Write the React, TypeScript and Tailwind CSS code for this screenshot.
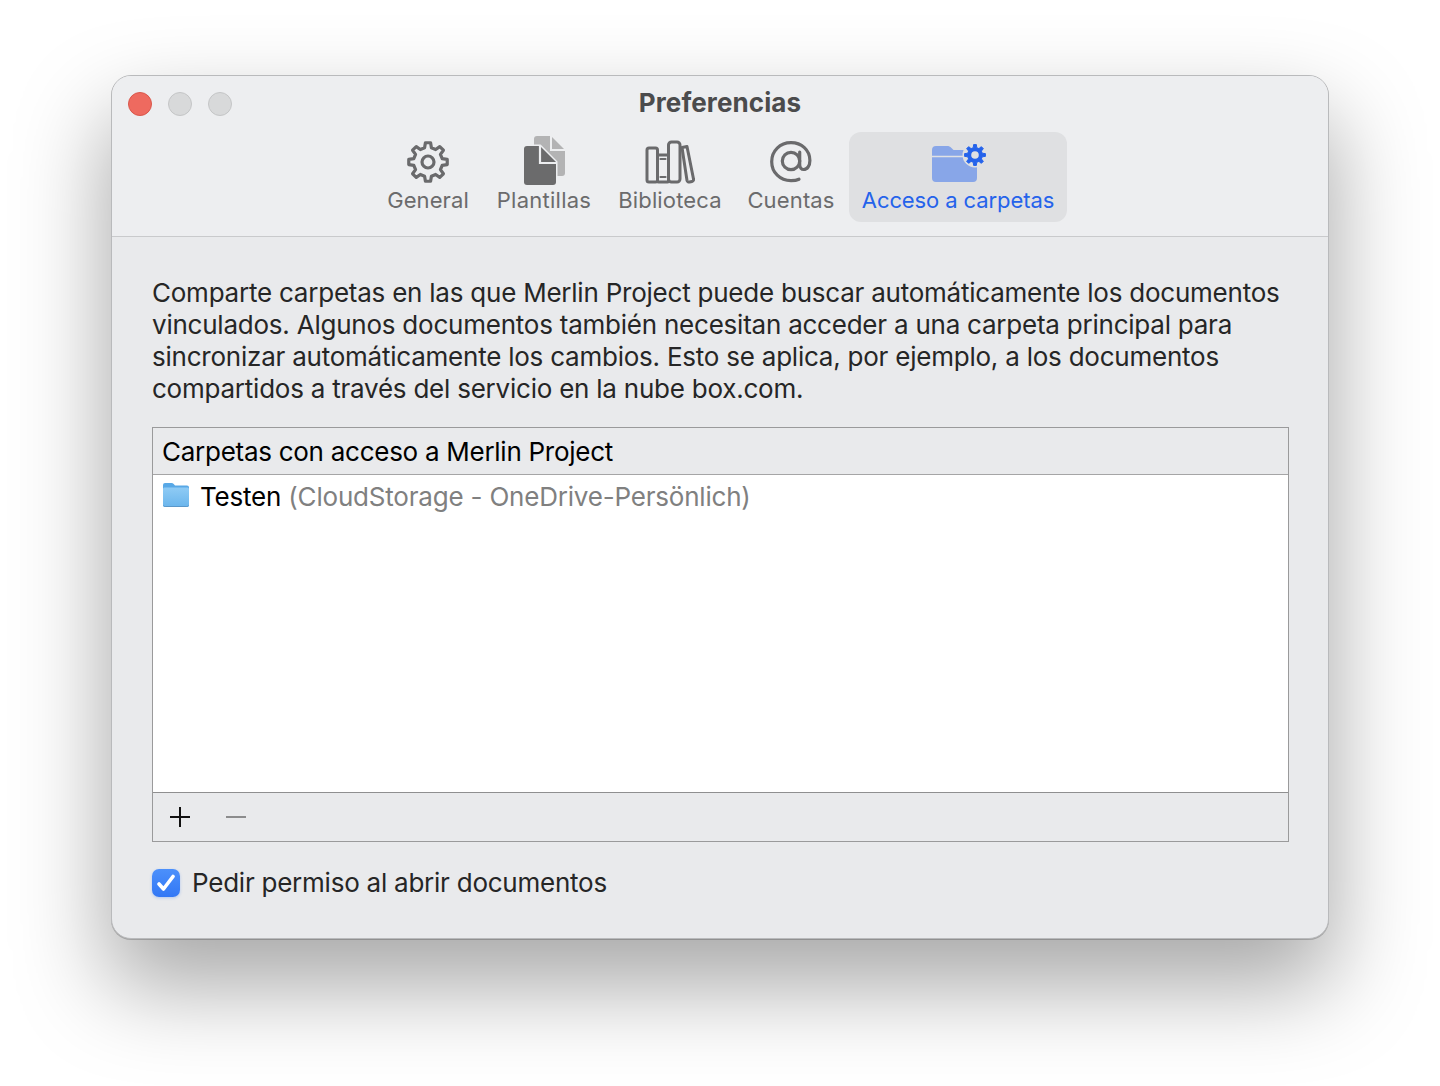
const gearPath = (cx: number, cy: number, rOut: number, rIn: number, teeth: number) => {
  const pts: string[] = [];
  const step = (Math.PI * 2) / teeth;
  for (let i = 0; i < teeth; i++) {
    const a = i * step - Math.PI / 2;
    const p = (r: number, t: number) => `${(cx + r * Math.cos(t)).toFixed(2)} ${(cy + r * Math.sin(t)).toFixed(2)}`;
    pts.push(`${i === 0 ? "M" : "L"}${p(rIn, a - step * 0.3)}`);
    pts.push(`L${p(rOut, a - step * 0.17)}`);
    pts.push(`L${p(rOut, a + step * 0.17)}`);
    pts.push(`L${p(rIn, a + step * 0.3)}`);
  }
  return pts.join(" ") + "Z";
};

function GearIcon() {
  return (
    <svg width="44" height="44" viewBox="0 0 44 44" fill="none" stroke="#6a6a6c" strokeWidth="3.2" strokeLinejoin="round">
      <path d={gearPath(22, 22, 19.4, 14.6, 8)} />
      <circle cx="22" cy="22" r="6" />
    </svg>
  );
}

function TemplatesIcon() {
  return (
    <svg width="44" height="50" viewBox="-1 0 44 50">
      <path d="M14 1h14l14 14v23a3 3 0 0 1-3 3H14a3 3 0 0 1-3-3V4a3 3 0 0 1 3-3Z" fill="#b3b3b4" />
      <path d="M28 1v14h14" fill="none" stroke="#edeef0" strokeWidth="2" />
      <path d="M4 11h13l16 16v20a3 3 0 0 1-3 3H4a3 3 0 0 1-3-3V14a3 3 0 0 1 3-3Z" fill="#6b6b6c" stroke="#edeef0" strokeWidth="3" paintOrder="stroke" />
      <path d="M17 11v17h16" fill="none" stroke="#edeef0" strokeWidth="2.200" />
    </svg>
  );
}

function BooksIcon() {
  return (
    <svg width="50" height="44" viewBox="0 0 50 44" fill="none" stroke="#6a6a6c" strokeWidth="3" strokeLinejoin="round" strokeLinecap="round">
      <rect x="2" y="8" width="10.500" height="34" rx="2" />
      <rect x="12.500" y="15" width="11" height="27" rx="1" />
      <rect x="23.500" y="2" width="11.500" height="40" rx="3" />
      <path d="M37 7.500 42 6.500 48.500 39a2 2 0 0 1-1.500 2.500l-2.500.5a2 2 0 0 1-2.500-1.500Z" />
      <path d="M15.500 19h5M15.500 37h5" strokeWidth="2.200" />
    </svg>
  );
}

function AtIcon() {
  return (
    <svg width="42" height="42" viewBox="0 0 42 42" fill="none" stroke="#6a6a6c" strokeWidth="3.200" strokeLinecap="round">
      <circle cx="21" cy="20" r="8.700" />
      <path d="M29.700 11v12.500c0 3 1.800 5 4 5 3.500 0 6.200-3.600 6.200-9C39.900 9 31.500 1.700 21 1.700 10 1.700 1.700 10 1.700 20.700S10 39.700 21 39.700c3.300 0 6-.5 8-1.500" />
    </svg>
  );
}

function FolderGearIcon() {
  return (
    <svg width="56" height="40" viewBox="0 0 56 40">
      <path d="M4 2h11c2 0 3 .6 4.500 2l2 2H41a4 4 0 0 1 4 4v24a4 4 0 0 1-4 4H4a4 4 0 0 1-4-4V6a4 4 0 0 1 4-4Z" fill="#88a6e8" />
      <path d="M0 12.500h36" stroke="#e0e1e4" strokeWidth="1.600" />
      <circle cx="43" cy="11" r="12.500" fill="#dfe0e2" />
      <path d={gearPath(43, 11, 10.500, 7.500, 8)} fill="#2563eb" stroke="#2563eb" strokeWidth="1" strokeLinejoin="round" />
      <circle cx="43" cy="11" r="3.800" fill="#dfe0e2" />
    </svg>
  );
}

function SmallFolder() {
  return (
    <svg width="26" height="24" viewBox="0 0 26 24">
      <defs>
        <linearGradient id="sf" x1="0" y1="0" x2="0" y2="1">
          <stop offset="0" stopColor="#8fcbf5" />
          <stop offset="1" stopColor="#6ab5ec" />
        </linearGradient>
      </defs>
      <path d="M2 0h6.500c1 0 1.600.4 2.200 1l1.300 1.400h12a2 2 0 0 1 2 2V22a2 2 0 0 1-2 2H2a2 2 0 0 1-2-2V2a2 2 0 0 1 2-2Z" fill="#58a8e6" />
      <path d="M0 6a1.500 1.500 0 0 1 1.500-1.500h23A1.500 1.500 0 0 1 26 6v16a2 2 0 0 1-2 2H2a2 2 0 0 1-2-2Z" fill="url(#sf)" />
      <path d="M.5 22.500c.4.700 1 1 1.700 1h21.600c.7 0 1.300-.3 1.700-1" fill="none" stroke="#5a97c9" strokeWidth="1" />
    </svg>
  );
}

const tabs = [
  { label: "General", width: "w-[110px]", track: "tracking-[0.08px]", box: "pt-[5px]", icon: <GearIcon /> },
  { label: "Plantillas", width: "w-[122px]", track: "tracking-[0.25px]", box: "pt-[1px]", icon: <TemplatesIcon /> },
  { label: "Biblioteca", width: "w-[130px]", track: "tracking-[0.15px]", box: "pt-[5px]", icon: <BooksIcon /> },
  { label: "Cuentas", width: "w-[112px]", track: "tracking-[0.15px]", box: "pt-[5px]", icon: <AtIcon /> },
];

export default function App() {
  return (
    <div className="h-[1086px] w-full overflow-hidden bg-white pt-[75px] pl-[111px] font-['Inter','Liberation_Sans',sans-serif]">
      <div className="h-[864px] w-[1218px] overflow-hidden rounded-[20px] border border-[#b9babc] bg-[#e9eaec] shadow-[0_1px_0_rgba(0,0,0,0.2),0_44px_90px_4px_rgba(0,0,0,0.34)] flex flex-col">
        <header className="h-[161px] shrink-0 bg-[#edeef0] border-b border-[#c9cacc] relative">
          <div className="absolute left-[16px] top-[16px] flex gap-[16px]">
            <span className="block h-6 w-6 rounded-full bg-[#ee6a5f] border border-[#d9574b]" />
            <span className="block h-6 w-6 rounded-full bg-[#d8d9da] border border-[#c4c5c6]" />
            <span className="block h-6 w-6 rounded-full bg-[#d8d9da] border border-[#c4c5c6]" />
          </div>
          <div className="pt-[11px] h-[56px] text-center text-[26px] leading-[32px] font-bold text-[#4b4b4c] tracking-[0.1px]">Preferencias</div>
          <nav className="flex justify-center items-start">
            {tabs.map((t) => (
              <div key={t.label} className={`${t.width} h-[90px] flex flex-col items-center`}>
                <div className={`h-[55px] flex items-center justify-center ${t.box}`}>{t.icon}</div>
                <div className={`text-[22px] leading-[26px] text-[#6b6b6c] whitespace-nowrap ${t.track}`}>{t.label}</div>
              </div>
            ))}
            <div className="ml-[2px] w-[218px] h-[90px] rounded-[12px] bg-[#dfe0e2] flex flex-col items-center">
              <div className="h-[55px] pt-[9px] flex items-center justify-center pl-[3px]"><FolderGearIcon /></div>
              <div className="text-[22px] leading-[26px] text-[#2563eb] whitespace-nowrap tracking-[-0.1px]">Acceso a carpetas</div>
            </div>
          </nav>
        </header>
        <main className="flex-1 px-[40px] pt-[40px]">
          <p className="text-[26px] leading-[32px] text-[#262626] tracking-[-0.23px] whitespace-nowrap">
            Comparte carpetas en las que Merlin Project puede buscar automáticamente los documentos<br />
            vinculados. Algunos documentos también necesitan acceder a una carpeta principal para<br />
            sincronizar automáticamente los cambios. Esto se aplica, por ejemplo, a los documentos<br />
            compartidos a través del servicio en la nube box.com.
          </p>
          <section className="mt-[22px] w-[1137px] h-[415px] border border-[#9a9a9b] flex flex-col">
            <div className="h-[47px] shrink-0 border-b border-[#a5a5a6] pl-[9px] flex items-center text-[26px] text-black tracking-[-0.27px]">Carpetas con acceso a Merlin Project</div>
            <div className="h-[318px] shrink-0 bg-white border-b border-[#8f8f90] pl-[10px] pt-[8px] flex items-start gap-[11px]">
              <SmallFolder />
              <div className="text-[26px] leading-[28px] tracking-[-0.2px] text-black whitespace-nowrap">
                Testen <span className="text-[#808080]">(CloudStorage - OneDrive-Persönlich)</span>
              </div>
            </div>
            <div className="flex-1 flex items-center pl-[17px] gap-[36px]">
              <svg width="20" height="20" viewBox="0 0 20 20" stroke="#111" strokeWidth="2"><path d="M10 0v20M0 10h20" /></svg>
              <svg width="20" height="20" viewBox="0 0 20 20" stroke="#8c8c8d" strokeWidth="2"><path d="M0 10h20" /></svg>
            </div>
          </section>
          <label className="mt-[26px] flex items-center gap-3">
            <span className="h-7 w-7 rounded-[7px] bg-gradient-to-b from-[#4c90fb] to-[#3277f5] shadow-[0_1px_3px_rgba(50,119,245,0.3)] flex items-center justify-center">
              <svg width="20" height="18" viewBox="0 0 20 18" fill="none" stroke="#fff" strokeWidth="3.600" strokeLinecap="round" strokeLinejoin="round"><path d="M3 10 7.500 15 17 2.500" /></svg>
            </span>
            <span className="text-[26px] leading-[30px] text-[#262626] tracking-[-0.24px]">Pedir permiso al abrir documentos</span>
          </label>
        </main>
      </div>
    </div>
  );
}
